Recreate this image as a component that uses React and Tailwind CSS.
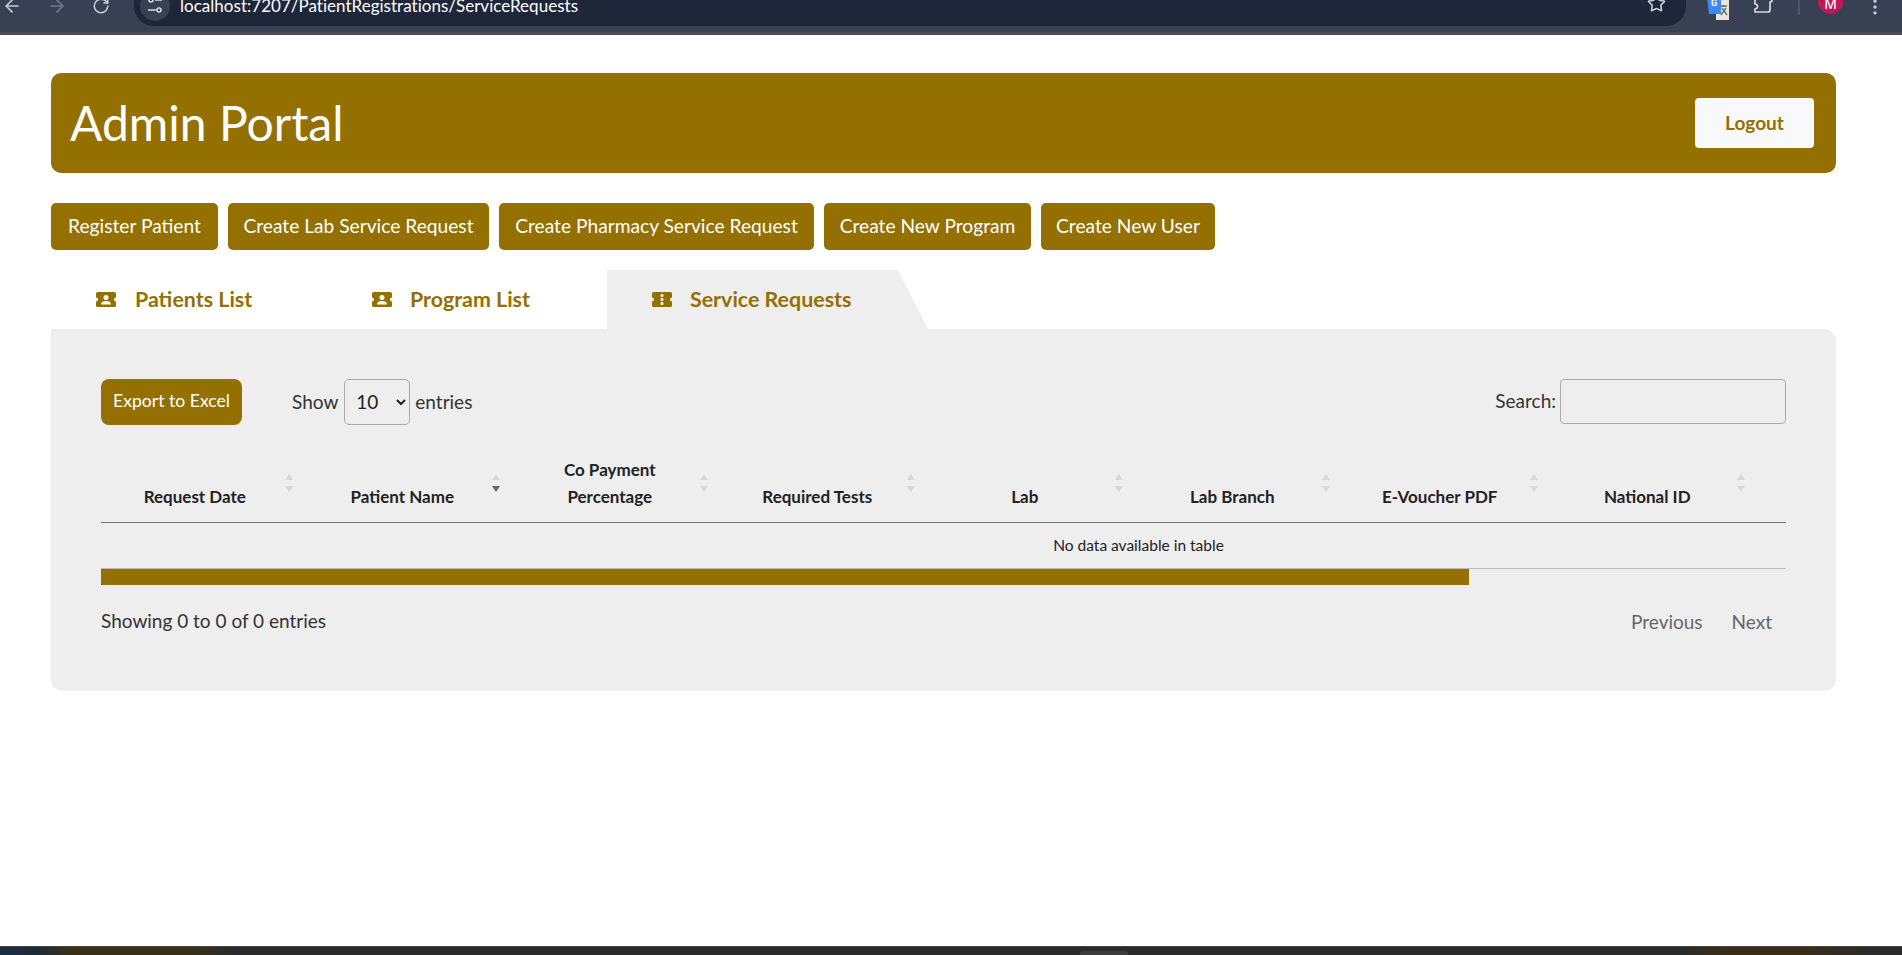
import React from 'react';
import { ArrowLeft, ArrowRight, RotateCw, Star, EllipsisVertical } from 'lucide-react';

const actions = [
  { label: 'Register Patient', width: 'w-[167px]' },
  { label: 'Create Lab Service Request', width: 'w-[261px]' },
  { label: 'Create Pharmacy Service Request', width: 'w-[315px]' },
  { label: 'Create New Program', width: 'w-[207px]' },
  { label: 'Create New User', width: 'w-[174px]' },
];
const columns = [['Request Date'], ['Patient Name'], ['Co Payment', 'Percentage'], ['Required Tests'], ['Lab'], ['Lab Branch'], ['E-Voucher PDF'], ['National ID'], [], []];

const TicketIcon = ({ dots }) => (
  <svg width="20" height="15" viewBox="0 0 20 15" className="shrink-0">
    <path fill="#947000" d="M1.500 0h17A1.500 1.500 0 0 1 20 1.500V5.500a2 2 0 0 0 0 4v4a1.500 1.500 0 0 1-1.500 1.500h-17A1.500 1.500 0 0 1 0 13.500v-4a2 2 0 0 0 0-4V1.500A1.500 1.500 0 0 1 1.500 0z" />
    {dots ? (
      <g fill="#eeeeee">
        <rect x="8.500" y="2" width="3" height="3" rx="1" />
        <rect x="8.500" y="6" width="3" height="3" rx="1" />
        <rect x="8.500" y="10" width="3" height="3" rx="1" />
      </g>
    ) : (
      <g fill="#ffffff">
        <circle cx="10" cy="5.500" r="2.500" />
        <path d="M5 12.500c0-2.400 2.200-3.500 5-3.500s5 1.100 5 3.500z" />
      </g>
    )}
  </svg>
);

const SortArrows = ({ active }) => (
  <span className="absolute right-[16px] top-[27px] flex flex-col gap-[6px]">
    <svg width="8" height="6" viewBox="0 0 8 6" className="block"><path d="M4 0l4 6H0z" fill="#d8d8d8" /></svg>
    <svg width="8" height="6" viewBox="0 0 8 6" className="block"><path d="M4 6l4-6H0z" fill={active ? '#666666' : '#d8d8d8'} /></svg>
  </span>
);

const TuneIcon = () => (
  <svg width="18" height="18" viewBox="0 0 18 18" fill="none" stroke="#d5d9e2" strokeWidth="1.600">
    <circle cx="5" cy="3" r="2" />
    <path d="M9 3h7M2 13h8" />
    <circle cx="13" cy="13" r="2" />
  </svg>
);

const TranslateIcon = () => (
  <svg width="22" height="23" viewBox="0 0 22 23" className="block">
    <rect x="9" y="2" width="13" height="21" fill="#e8e6e0" />
    <path d="M13 9h7M16.500 8v2M14 18l5-7M15 11l5 7" stroke="#5f6b7a" strokeWidth="1.300" fill="none" />
    <path d="M0 0h14v17H2z" fill="#4285f4" />
    <text x="7" y="9" fontSize="9" fontWeight="700" fill="#ffffff" textAnchor="middle" fontFamily="Roboto, sans-serif">G</text>
  </svg>
);

const ExtensionIcon = () => (
  <svg width="21" height="16" viewBox="0 0 21 16" fill="none" stroke="#d5d9e2" strokeWidth="1.700" strokeLinejoin="round">
    <path d="M1 -4h15v5a2 2 0 0 1 0 4v8a2 2 0 0 1-2 2H1v-3a2.500 2.500 0 0 0 0-5V-4z" />
  </svg>
);

const BrowserBar = () => (
  <div className="h-[35px] shrink-0 overflow-hidden bg-[#384154] border-b-[3px] border-[#474c5c] flex items-start text-[#c7ccd6]">
    <div className="flex items-center gap-[25px] pl-[2px] -mt-[7px] h-[26px]">
      <ArrowLeft size={20} />
      <ArrowRight size={20} className="opacity-40" />
      <RotateCw size={18} />
    </div>
    <div className="ml-[24px] h-[26px] w-[1552px] rounded-b-[20px] bg-[#1e2639] flex items-center justify-between pl-[6px] pr-[20px]">
      <div className="flex items-center gap-[10px] -mt-[15px]">
        <span className="w-[30px] h-[30px] rounded-full bg-[#384154] flex items-center justify-center"><TuneIcon /></span>
        <span className="text-[17px] tracking-[0.02px] text-white font-['Lato',sans-serif]">localhost:7207/PatientRegistrations/ServiceRequests</span>
      </div>
      <Star size={19} className="-mt-[20px]" />
    </div>
    <div className="flex items-start h-[20px] -mt-[3px]">
      <span className="ml-[21px]"><TranslateIcon /></span>
      <span className="ml-[25px]"><ExtensionIcon /></span>
      <span className="ml-[23px] w-[2px] h-[18px] bg-[#4d5567]" />
      <span className="ml-[18px] w-[25px] h-[25px] -mt-[8px] rounded-full bg-[#c2185b] text-white text-[14px] text-center leading-[30px] font-['Roboto',sans-serif]">M</span>
      <EllipsisVertical size={20} className="ml-[22px]" />
    </div>
  </div>
);

export default function App() {
  return (
    <div className="h-screen flex flex-col bg-white overflow-hidden font-['Lato',sans-serif]">
      <BrowserBar />
      <main className="flex-1 pl-[51px] pt-[38px] pr-[66px]">
        <header className="h-[100px] rounded-[10px] bg-[#947000] flex items-center justify-between pl-[19px] pr-[22px]">
          <h1 className="text-[48px] text-white font-normal leading-none">Admin Portal</h1>
          <button className="w-[119px] h-[50px] rounded-[4px] bg-[#f8f9fa] text-[#947000] text-[19px] font-bold">Logout</button>
        </header>

        <div className="flex gap-[10px] mt-[30px]">
          {actions.map(({ label, width }) => (
            <button key={label} className={`${width} h-[47px] rounded-[5px] bg-[#947000] text-white text-[19.2px]`}>{label}</button>
          ))}
        </div>

        <div className="flex h-[59px] mt-[20px] text-[#947000] text-[21.400px] font-bold">
          <div className="w-[277px] flex items-center pl-[45px] gap-[19px]"><TicketIcon />Patients List</div>
          <div className="w-[279px] flex items-center pl-[44px] gap-[18px]"><TicketIcon />Program List</div>
          <div className="w-[321px] flex items-center pl-[45px] gap-[18px] bg-[#eeeeee] [clip-path:polygon(0_0,291px_0,321px_59px,0_59px)]"><TicketIcon dots />Service Requests</div>
        </div>

        <section className="h-[362px] rounded-b-[12px] rounded-tr-[12px] bg-[#eeeeee] px-[50px] pt-[49px] text-[#333333]">
          <div className="flex items-center justify-between h-[47px]">
            <div className="flex items-center text-[19px]">
              <button className="w-[141px] h-[46px] rounded-[8px] bg-[#947000] text-white text-[17.600px]">Export to Excel</button>
              <span className="ml-[50px] mt-[1px]">Show</span>
              <select className="ml-[6px] w-[66px] h-[46px] rounded-[5px] border border-[#aaaaaa] bg-transparent px-[7px] text-[#222222]">
                <option>10</option>
              </select>
              <span className="ml-[5px] mt-[1px]">entries</span>
            </div>
            <label className="flex items-center gap-[4px] text-[19px] -mt-[1px]">
              Search:
              <input className="w-[226px] h-[45px] rounded-[4px] border border-[#aaaaaa] bg-transparent" />
            </label>
          </div>

          <div className="mt-[22px] overflow-hidden">
            <table className="w-[2075px] table-fixed border-collapse">
              <thead>
                <tr className="border-b border-[#777777]">
                  {columns.map((lines, i) => (
                    <th key={i} className="relative w-[207.500px] pl-[10px] pr-[30px] pt-[9px] pb-[12px] align-bottom text-center text-[17px] font-bold leading-[27px] text-[#222222]">
                      {lines.map(line => <div key={line}>{line}</div>)}
                      <SortArrows active={i === 1} />
                    </th>
                  ))}
                </tr>
              </thead>
              <tbody>
                <tr className="border-b border-[#bbbbbb]">
                  <td colSpan={10} className="h-[46px] text-center text-[15.500px] text-[#222222]">No data available in table</td>
                </tr>
              </tbody>
            </table>
          </div>
          <div className="h-[16px] w-[1368px] bg-[#947000]" />

          <div className="flex items-center justify-between mt-[21px] text-[19px]">
            <span>Showing 0 to 0 of 0 entries</span>
            <div className="flex gap-[29px] pr-[14px] pt-[2px] text-[#666666]">
              <span>Previous</span>
              <span>Next</span>
            </div>
          </div>
        </section>
      </main>
      <div className="h-[9px] shrink-0 border-t border-[#444444] bg-[linear-gradient(90deg,#1a2c45_0px,#1f2a35_40px,#3a3018_70px,#3a3018_190px,#2a2a2a_230px,#2a2a2a_1680px,#3a2c1a_1720px,#3a2c1a_1800px,#2a2a2a_1880px)] flex items-end">
        <span className="ml-[1080px] w-[48px] h-[4px] rounded-t-[3px] bg-[#3c3c3c]" />
      </div>
    </div>
  );
}
